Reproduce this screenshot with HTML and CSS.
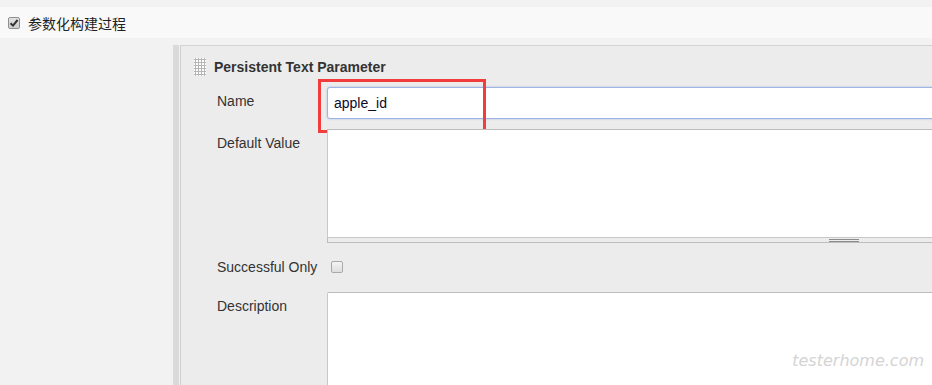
FILE: index.html
```html
<!DOCTYPE html>
<html lang="zh-CN">

<head>
    <meta charset="UTF-8">
    <title>参数化构建过程</title>
    <link rel="stylesheet" href="styles.css">
</head>

<body>
    <div class="option">
        <span class="check is-checked">
            <svg width="10" height="10" viewBox="0 0 10 10">
                <path d="M1.5 5.2 L4 7.6 L8.6 2" fill="none" stroke="#333" stroke-width="2" />
            </svg>
        </span>
        <span class="option-label">参数化构建过程</span>
    </div>

    <main>
        <div class="rail"></div>
        <section class="panel">
            <header>
                <span class="handle"></span>
                <h2>Persistent Text Parameter</h2>
            </header>

            <div class="row">
                <label>Name</label>
                <div class="field">
                    <input type="text" value="apple_id">
                    <span class="highlight"></span>
                </div>
            </div>

            <div class="row">
                <label>Default Value</label>
                <div class="field">
                    <div class="textarea is-short"></div>
                    <div class="resizer"><span></span></div>
                </div>
            </div>

            <div class="row is-inline">
                <label>Successful Only</label>
                <div class="field">
                    <span class="check"></span>
                </div>
            </div>

            <div class="row">
                <label>Description</label>
                <div class="field">
                    <div class="textarea is-tall"></div>
                </div>
            </div>
        </section>
    </main>

    <span class="watermark">testerhome.com</span>
</body>

</html>
```

FILE: styles.css
```css
*,
*::before,
*::after {
    box-sizing: border-box;
    margin: 0;
    padding: 0;
}

body {
    font-family: 'Liberation Sans', Arial, 'Noto Sans CJK SC', sans-serif;
    font-size: 14px;
    color: #333;
    background: #f2f2f2;
    height: 385px;
    overflow: hidden;
    position: relative;
    padding-top: 7px;
}

.option {
    display: flex;
    align-items: center;
    gap: 8px;
    height: 31px;
    padding-left: 8px;
    background: #f9f9f9;
}

.option-label {
    font-family: 'Noto Sans CJK SC', sans-serif;
    font-size: 14px;
    color: #222;
}

.check {
    display: grid;
    place-content: center;
    width: 12px;
    height: 12px;
    border: 1px solid #a9a9a9;
    border-radius: 2px;
    background: linear-gradient(#f4f4f4, #dedede);

    &.is-checked {
        background: linear-gradient(#e2e2e2, #cfcfcf);
        border-color: #8f8f8f;
    }
}

main {
    display: flex;
    padding: 7px 0 0 173px;
}

.rail {
    flex-shrink: 0;
    width: 6px;
    background: #dadada;
    margin-right: 1px;
}

.panel {
    flex-shrink: 0;
    width: 900px;
    background: #ececec;
    border-left: 1px solid #cfcfcf;
    border-top: 1px solid #d4d4d4;
    padding: 12px 0 0 13px;

    & header {
        display: flex;
        align-items: center;
        gap: 8px;
        height: 18px;
        margin-bottom: 11px;
    }

    & h2 {
        font-size: 14px;
        font-weight: bold;
        color: #333;
    }
}

.handle {
    width: 12px;
    height: 18px;
    background-color: #fff;
    background-image: radial-gradient(circle at 1.5px 1.5px, #b5b5b5 1px, transparent 1.3px);
    background-size: 3px 3px;
}

.row {
    display: grid;
    grid-template-columns: 110px 1fr;
    padding-left: 23px;
    margin-bottom: 10px;

    & label {
        padding-top: 5px;
        line-height: 18px;
        color: #333;
    }

    &.is-inline {
        align-items: center;
        height: 24px;
        margin: 12px 0 13px;

        & label {
            padding-top: 0;
        }

        & .check {
            margin-left: 4px;
        }
    }
}

.field {
    position: relative;

    & input {
        display: block;
        width: 100%;
        height: 32px;
        border: 1px solid #9fb6e4;
        border-radius: 3px;
        box-shadow: 0 0 2px rgba(90, 140, 230, .5);
        padding: 0 6px;
        font-family: 'Liberation Sans', Arial, sans-serif;
        font-size: 14px;
        color: #0a0a2a;
        background: #fff;
        outline: none;
    }
}

.highlight {
    position: absolute;
    left: -9px;
    top: -8px;
    width: 168px;
    height: 54px;
    border: 3px solid #f23d3d;
}

.textarea {
    background: #fff;
    border: 1px solid #c8c8c8;
    border-top-color: #bdbdbd;

    &.is-short {
        height: 109px;
    }

    &.is-tall {
        height: 93px;
        border-bottom: 0;
        border-radius: 2px 2px 0 0;
    }
}

.resizer {
    height: 5px;
    border: 1px solid #bdbdbd;
    border-top: 0;
    position: relative;

    & span {
        position: absolute;
        left: 501px;
        top: 1px;
        width: 30px;
        height: 3px;
        border-top: 1px solid #8c8c8c;
        border-bottom: 1px solid #8c8c8c;
    }
}

.watermark {
    position: absolute;
    right: 8px;
    bottom: 15px;
    font-family: 'DejaVu Sans', sans-serif;
    font-style: italic;
    font-weight: 200;
    font-size: 16px;
    color: #d4d4d4;
}
```
